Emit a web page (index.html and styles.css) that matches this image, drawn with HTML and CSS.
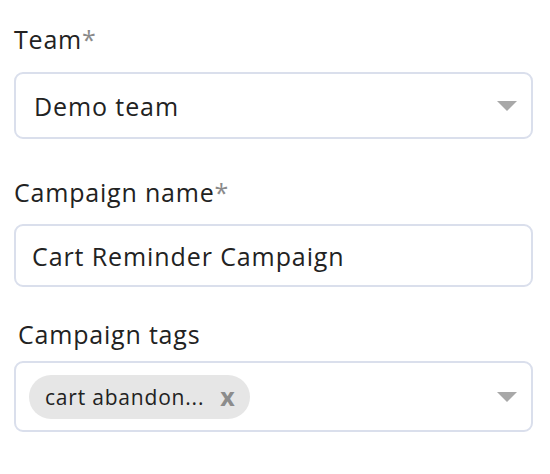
FILE: index.html
```html
<!DOCTYPE html>
<html>
<head>
<meta charset="utf-8">
<link rel="stylesheet" href="styles.css">
</head>
<body>
<form class="form">
  <div class="field field-team">
    <label class="label">Team<span class="req">*</span></label>
    <div class="control select">
      <span class="value">Demo team</span>
      <span class="caret"></span>
    </div>
  </div>
  <div class="field field-name">
    <label class="label">Campaign name<span class="req">*</span></label>
    <div class="control input">
      <span class="value">Cart Reminder Campaign</span>
    </div>
  </div>
  <div class="field field-tags">
    <label class="label label-tags">Campaign tags</label>
    <div class="control select tags">
      <span class="chip"><span class="chip-text">cart abandon...</span><span class="chip-x">x</span></span>
      <span class="caret"></span>
    </div>
  </div>
</form>
</body>
</html>
```
FILE: styles.css
```css
html, body {
  margin: 0;
  padding: 0;
  background: #ffffff;
}
body {
  font-family: "Open Sans", "Noto Sans", sans-serif;
  color: #222222;
}
.form {
  display: flex;
  flex-direction: column;
  padding: 0 17px 0 14px;
}
.field {
  display: flex;
  flex-direction: column;
}
.label {
  font-size: 25px;
  line-height: 30px;
  letter-spacing: 0.8px;
  color: #222;
}
.req {
  color: #8a8a8a;
}
.field-team .label { margin-top: 24px; margin-bottom: 18px; }
.field-name .label { margin-top: 38px; margin-bottom: 17px; }
.field-tags .label { margin-top: 32px; margin-bottom: 12px; padding-left: 4px; }
.control {
  box-sizing: border-box;
  border: 2px solid #dadfec;
  border-radius: 9px;
  display: flex;
  align-items: center;
  font-size: 25px;
  letter-spacing: 0.9px;
  color: #222;
}
.field-team .control { height: 67px; padding-left: 18px; }
.field-name .control { height: 63px; padding-left: 16px; }
.field-tags .control { height: 71px; padding-left: 13px; }
.value { flex: 1; }
.caret {
  width: 0;
  height: 0;
  border-left: 10px solid transparent;
  border-right: 10px solid transparent;
  border-top: 10px solid #a8a8a8;
  margin-right: 14px;
  margin-left: auto;
}
.chip {
  display: inline-flex;
  align-items: center;
  height: 44px;
  border-radius: 22px;
  background: #e6e6e6;
  padding: 0 15px 0 16px;
  font-size: 21px;
  letter-spacing: 0.8px;
}
.chip-text { color: #222; }
.chip-x {
  color: #8c8c8c;
  margin-left: 16px;
  font-size: 25px;
  line-height: 1;
  font-weight: 700;
  letter-spacing: 0;
}
```
